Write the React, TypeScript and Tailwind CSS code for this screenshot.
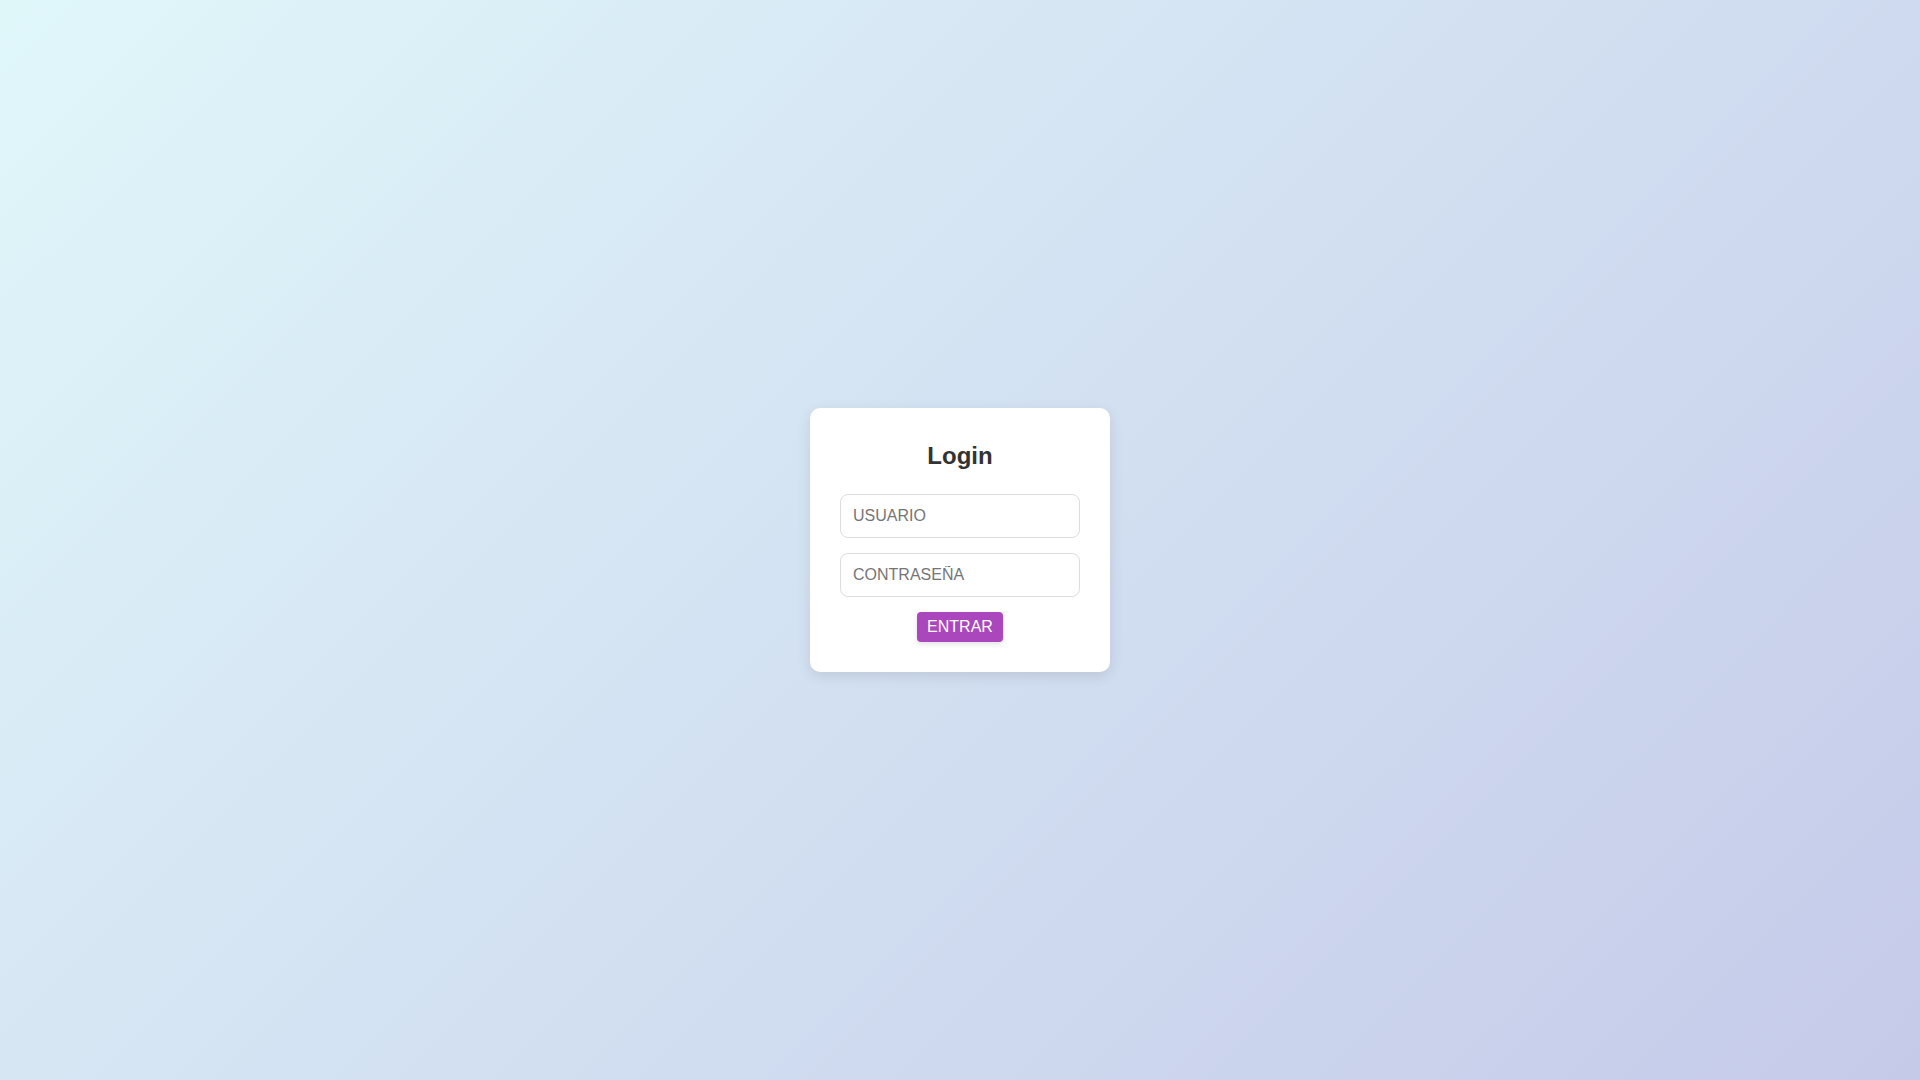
export default function App() {
	return (
		<div
			className="flex min-h-screen w-full items-center justify-center bg-[linear-gradient(135deg,#e0f7fa,#c5cae9)]"
			style={{ fontFamily: '"Liberation Sans", Arial, sans-serif' }}
		>
			<form
				className="flex w-[300px] flex-col rounded-[10px] bg-white px-[30px] pb-[30px] pt-[34px] shadow-[0_4px_14px_rgba(0,0,0,0.1)]"
				onSubmit={(e) => e.preventDefault()}
			>
				<h2 className="mb-[24px] text-center text-[24px] font-bold leading-[28px] text-[#333]">
					Login
				</h2>
				<input
					type="text"
					placeholder="USUARIO"
					className="mb-[15px] w-full rounded-[8px] border border-[#ddd] px-[12px] py-[12px] text-[16px] leading-[18px] text-[#333] outline-none placeholder:text-[#757575]"
				/>
				<input
					type="password"
					placeholder="CONTRASEÑA"
					className="mb-[15px] w-full rounded-[8px] border border-[#ddd] px-[12px] py-[12px] text-[16px] leading-[18px] text-[#333] outline-none placeholder:text-[#757575]"
				/>
				<div className="flex justify-center">
					<button
						type="submit"
						className="rounded-[4px] bg-[#ab47bc] px-[10px] py-[6px] text-[16px] leading-[18px] text-white shadow-[0_2px_5px_rgba(0,0,0,0.12)]"
					>
						ENTRAR
					</button>
				</div>
			</form>
		</div>
	);
}
